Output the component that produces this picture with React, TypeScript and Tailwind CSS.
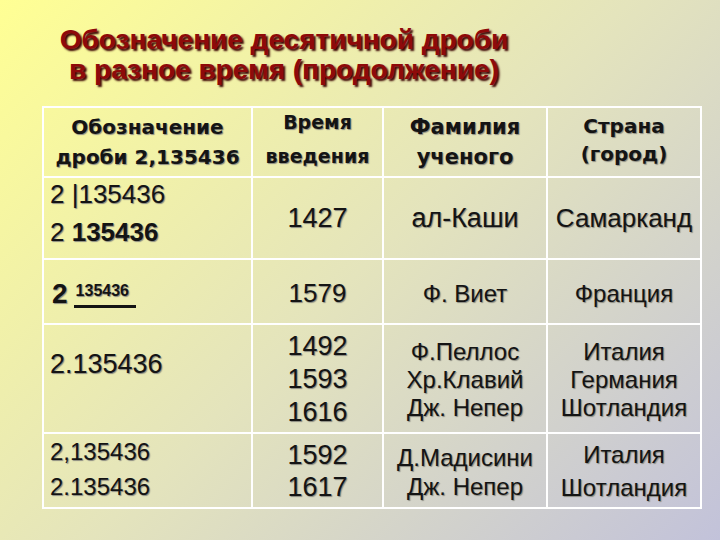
const font = { fontFamily: '"Liberation Sans", Arial, sans-serif' }
const headFont = { fontFamily: '"DejaVu Sans", Verdana, sans-serif' }

const top = "border-2 border-white p-0 align-top"
const mid = "border-2 border-white p-0 align-middle"
const shadow = "[text-shadow:1px_1px_1px_#8a8a80]"
const head = "text-center font-bold [text-shadow:1px_1px_1px_#8a8a80]"

export default function App() {
  return (
    <div
      className="w-[720px] h-[540px] overflow-hidden bg-[linear-gradient(135deg,#ffff94_0%,#e4e4bc_50%,#c2c2da_100%)] text-[#141414]"
      style={font}
    >
      {/* Title */}
      <div className="w-[568px] pt-[25px] text-center text-[28px] leading-[30px] font-bold text-[#8e0a0a] [text-shadow:2px_2px_2px_#3a0000]">
        <div>Обозначение десятичной дроби</div>
        <div>в разное время (продолжение)</div>
      </div>

      {/* Table */}
      <table className="ml-[42px] mt-[21px] border-collapse table-fixed w-[658px]">
        <colgroup>
          <col className="w-[209px]" />
          <col className="w-[131px]" />
          <col className="w-[164px]" />
          <col className="w-[154px]" />
        </colgroup>
        <tbody>
          <tr className="h-[70px]">
            <td className={top}>
              <div className={`pt-[4px] text-[20px] leading-[30px] ${head}`} style={headFont}>
                <div>Обозначение</div>
                <div>дроби 2,135436</div>
              </div>
            </td>
            <td className={top}>
              <div className={`-mt-[3px] text-[19px] leading-[34px] ${head}`} style={headFont}>
                <div>Время</div>
                <div>введения</div>
              </div>
            </td>
            <td className={top}>
              <div className={`pt-[4px] text-[21px] leading-[30px] ${head}`} style={headFont}>
                <div>Фамилия</div>
                <div>ученого</div>
              </div>
            </td>
            <td className={top}>
              <div className={`pt-[4px] text-[20px] leading-[28px] ${head}`} style={headFont}>
                <div>Страна</div>
                <div>(город)</div>
              </div>
            </td>
          </tr>

          <tr className="h-[82px]">
            <td className={top}>
              <div className={`pl-[6px] -mt-[3px] text-[26px] leading-[38px] ${shadow}`}>
                <div>2 |135436</div>
                <div>
                  2 <span className="font-bold">135436</span>
                </div>
              </div>
            </td>
            <td className={mid}>
              <div className={`text-center text-[27px] ${shadow}`}>1427</div>
            </td>
            <td className={mid}>
              <div className={`text-center text-[27px] ${shadow}`}>ал-Каши</div>
            </td>
            <td className={mid}>
              <div className={`text-center text-[26px] ${shadow}`}>Самарканд</div>
            </td>
          </tr>

          <tr className="h-[65px]">
            <td className={top}>
              <div className={`flex items-start pl-[8px] pt-[20px] ${shadow}`}>
                <span className="text-[28px] leading-[28px] font-bold">2</span>
                <span className="ml-[8px] mt-[3px] flex flex-col">
                  <span className="text-[16px] leading-[16px] font-bold">135436</span>
                  <span className="mt-[6px] h-[3px] w-[62px] -ml-[2px] bg-[#141414]" />
                </span>
              </div>
            </td>
            <td className={mid}>
              <div className={`pt-[4px] text-center text-[26px] ${shadow}`}>1579</div>
            </td>
            <td className={mid}>
              <div className={`pt-[4px] text-center text-[24px] ${shadow}`}>Ф. Виет</div>
            </td>
            <td className={mid}>
              <div className={`pt-[4px] text-center text-[24px] ${shadow}`}>Франция</div>
            </td>
          </tr>

          <tr className="h-[109px]">
            <td className={top}>
              <div className={`pl-[6px] pt-[21px] text-[27px] leading-[36px] ${shadow}`}>2.135436</div>
            </td>
            <td className={top}>
              <div className={`pt-[5px] text-center text-[27px] leading-[33px] ${shadow}`}>
                <div>1492</div>
                <div>1593</div>
                <div>1616</div>
              </div>
            </td>
            <td className={top}>
              <div className={`pt-[13px] text-center text-[24px] leading-[28px] ${shadow}`}>
                <div>Ф.Пеллос</div>
                <div>Хр.Клавий</div>
                <div>Дж. Непер</div>
              </div>
            </td>
            <td className={top}>
              <div className={`pt-[13px] text-center text-[24px] leading-[28px] ${shadow}`}>
                <div>Италия</div>
                <div>Германия</div>
                <div>Шотландия</div>
              </div>
            </td>
          </tr>

          <tr className="h-[75px]">
            <td className={top}>
              <div className={`pl-[6px] text-[24px] leading-[35px] ${shadow}`}>
                <div>2,135436</div>
                <div>2.135436</div>
              </div>
            </td>
            <td className={top}>
              <div className={`pt-[5px] text-center text-[27px] leading-[32px] ${shadow}`}>
                <div>1592</div>
                <div>1617</div>
              </div>
            </td>
            <td className={top}>
              <div className={`pt-[9px] text-center text-[24px] leading-[29px] ${shadow}`}>
                <div>Д.Мадисини</div>
                <div>Дж. Непер</div>
              </div>
            </td>
            <td className={top}>
              <div className={`pt-[4px] text-center text-[24px] leading-[33px] ${shadow}`}>
                <div>Италия</div>
                <div>Шотландия</div>
              </div>
            </td>
          </tr>
        </tbody>
      </table>
    </div>
  )
}
